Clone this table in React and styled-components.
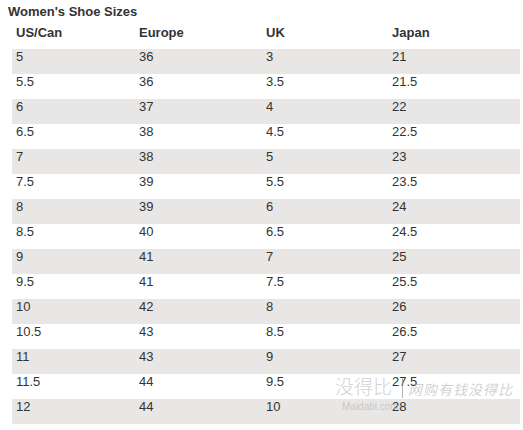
import React from 'react';
import styled, { createGlobalStyle } from 'styled-components';

const GlobalStyle = createGlobalStyle`
  body {
    margin: 0;
    background: #fff;
    font-family: "Liberation Sans", Arial, sans-serif;
  }
`;

const Page = styled.div`
  position: relative;
  width: 523px;
  height: 430px;
  overflow: hidden;
  color: #333;
`;

const Title = styled.h1`
  margin: 0;
  padding: 4px 0 0 8px;
  height: 16px;
  font-size: 13px;
  line-height: 16px;
  font-weight: bold;
  color: #333;
`;

const Table = styled.div`
  margin-left: 12px;
  width: 508px;
`;

const Row = styled.div`
  display: grid;
  grid-template-columns: 123px 127px 126px 1fr;
  height: ${(p) => (p.$head ? '29px' : '25px')};
  background: ${(p) => (p.$shaded ? '#e8e7e5' : '#fff')};
`;

const Cell = styled.div`
  padding: ${(p) => (p.$head ? '5px' : '0')} 0 0 4px;
  font-size: 13px;
  line-height: 16px;
  font-weight: ${(p) => (p.$head ? 'bold' : 'normal')};
  color: #333;
`;

const Watermark = styled.div`
  position: absolute;
  left: 335px;
  top: 374px;
  display: flex;
  flex-direction: column;
  pointer-events: none;
  color: rgba(170, 170, 170, 0.55);
`;

const MarkLine = styled.div`
  display: flex;
  align-items: flex-end;
`;

const MarkBig = styled.span`
  font-family: "Noto Sans CJK SC", sans-serif;
  font-size: 19px;
  line-height: 24px;
  font-weight: 300;
`;

const MarkBar = styled.span`
  width: 1px;
  height: 20px;
  background: rgba(150, 150, 150, 0.7);
  margin: 0 5px 0 10px;
`;

const MarkSmall = styled.span`
  font-family: "Noto Sans CJK SC", sans-serif;
  font-size: 14px;
  line-height: 18px;
  font-style: italic;
  letter-spacing: 1px;
`;

const MarkDomain = styled.span`
  font-size: 10px;
  line-height: 12px;
  margin: 3px 0 0 7px;
`;

const sizes = [
  ['5', '36', '3', '21'],
  ['5.5', '36', '3.5', '21.5'],
  ['6', '37', '4', '22'],
  ['6.5', '38', '4.5', '22.5'],
  ['7', '38', '5', '23'],
  ['7.5', '39', '5.5', '23.5'],
  ['8', '39', '6', '24'],
  ['8.5', '40', '6.5', '24.5'],
  ['9', '41', '7', '25'],
  ['9.5', '41', '7.5', '25.5'],
  ['10', '42', '8', '26'],
  ['10.5', '43', '8.5', '26.5'],
  ['11', '43', '9', '27'],
  ['11.5', '44', '9.5', '27.5'],
  ['12', '44', '10', '28'],
];

export default function App() {
  return (
    <Page>
      <GlobalStyle />
      <Title>Women's Shoe Sizes</Title>
      <Table>
        <Row $head>
          {['US/Can', 'Europe', 'UK', 'Japan'].map((h) => (
            <Cell $head key={h}>{h}</Cell>
          ))}
        </Row>
        {sizes.map((row, idx) => (
          <Row key={idx} $shaded={idx % 2 === 0}>
            {row.map((v, i) => <Cell key={i}>{v}</Cell>)}
          </Row>
        ))}
      </Table>
      <Watermark>
        <MarkLine>
          <MarkBig>没得比</MarkBig>
          <MarkBar />
          <MarkSmall>网购有钱没得比</MarkSmall>
        </MarkLine>
        <MarkDomain>Maidabi.com</MarkDomain>
      </Watermark>
    </Page>
  );
}
